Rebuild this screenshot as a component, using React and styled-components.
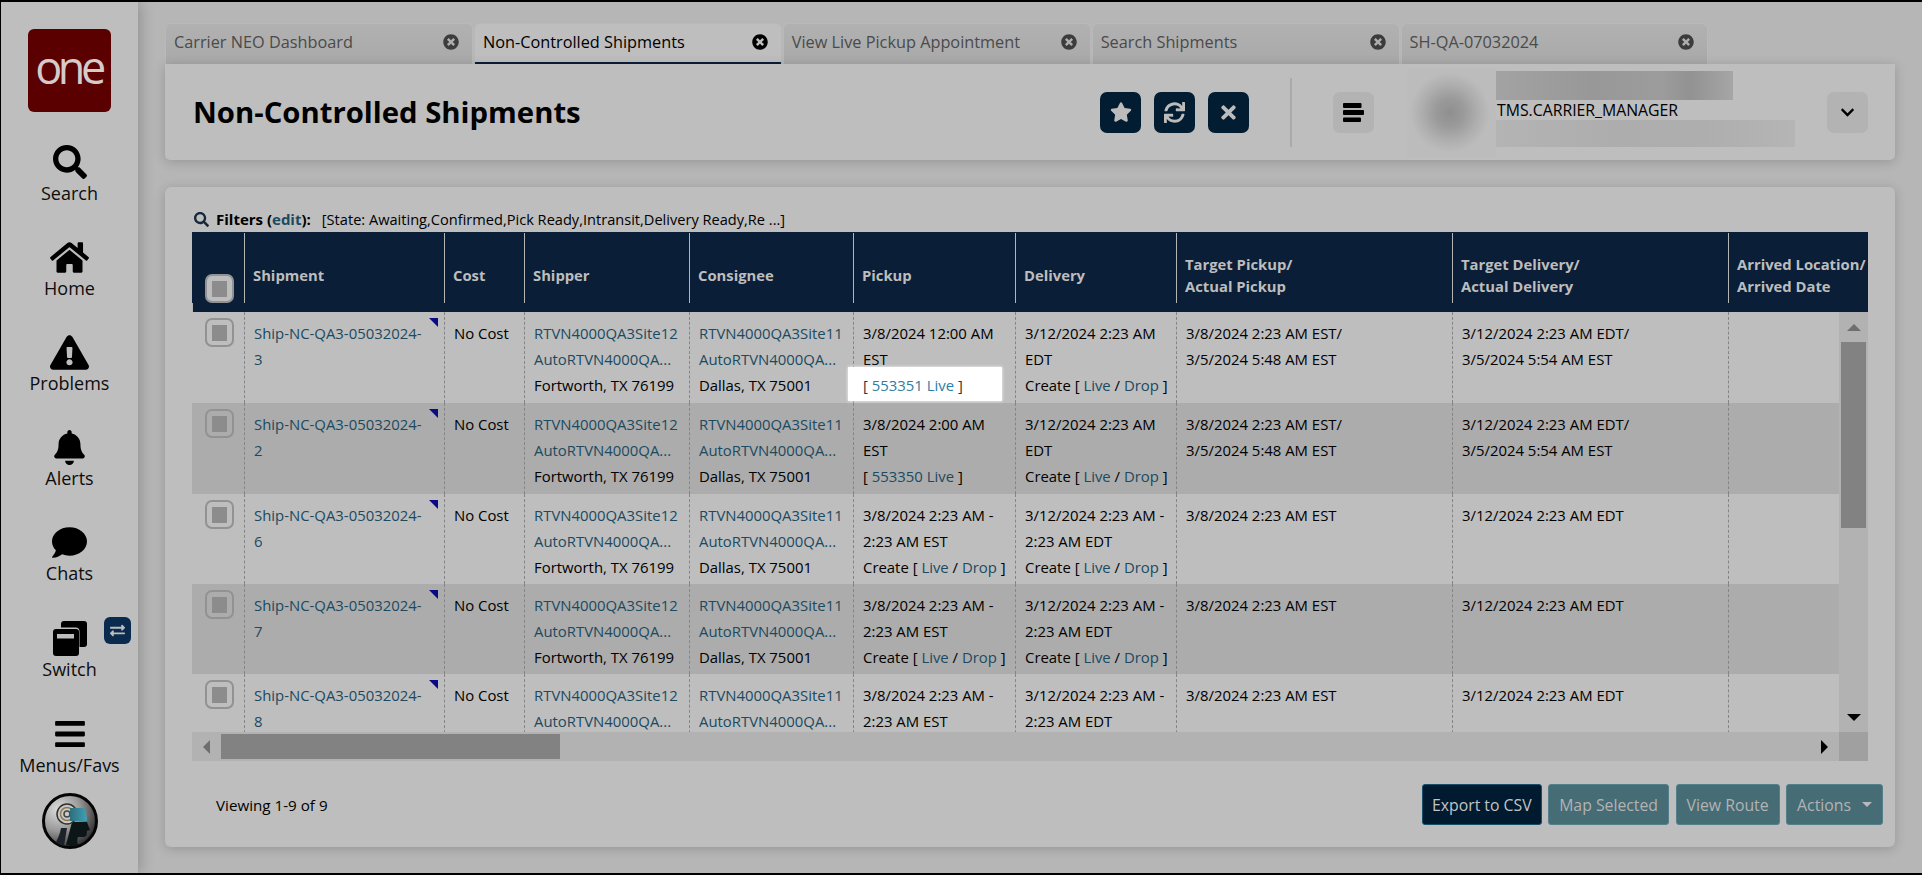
import React from "react";
import styled, { createGlobalStyle } from "styled-components";
import {
  FaSearch, FaHome, FaExclamationTriangle, FaBell, FaComment, FaBars,
  FaStar, FaSync, FaTimes, FaChevronDown, FaExchangeAlt, FaTimesCircle,
} from "react-icons/fa";

const GlobalStyle = createGlobalStyle`
  html, body { margin: 0; padding: 0; background: #000; }
  body { font-family: "Open Sans", "Liberation Sans", sans-serif; overflow: hidden; }
  * { box-sizing: border-box; }
`;

const COLUMNS = "52px 200px 80px 165px 164px 162px 161px 276px 276px 160px";

const Frame = styled.div`
  width: 1922px;
  height: 875px;
  border-top: 2px solid #000;
  border-bottom: 2px solid #000;
  border-left: 1px solid #000;
  display: flex;
  overflow: hidden;
  background: #b6b6b6;
`;

const Sidebar = styled.nav`
  width: 137px;
  flex: none;
  background: #bebebe;
  display: flex;
  flex-direction: column;
  align-items: center;
  padding-top: 27px;
  box-shadow: 2px 0 14px rgba(0, 0, 0, 0.22);
  position: relative;
  z-index: 2;
`;

const Logo = styled.div`
  width: 83px;
  height: 83px;
  border-radius: 6px;
  background: #5a0000;
  color: #d6cbcb;
  font-size: 45px;
  font-weight: 400;
  line-height: 76px;
  letter-spacing: -4.5px;
  text-align: center;
  padding-right: 2px;
  font-family: "Open Sans", "Liberation Sans", sans-serif;
`;

const NavList = styled.div`
  margin-top: 30px;
  display: flex;
  flex-direction: column;
  gap: 33px;
  align-self: stretch;
`;

const NavItem = styled.div`
  position: relative;
  display: flex;
  flex-direction: column;
  align-items: center;
  &:nth-child(n + 6) { margin-top: 1px; }
`;

const NavIcon = styled.div`
  height: 40px;
  display: flex;
  align-items: center;
  justify-content: center;
  color: #000;
`;

const NavLabel = styled.div`
  font-size: 18px;
  line-height: 22px;
  color: #0d0d0d;
`;

const SwitchBadge = styled.div`
  position: absolute;
  left: 103px;
  top: -1px;
  width: 27px;
  height: 27px;
  border-radius: 6px;
  background: #0b2b4e;
  color: #bdbdbd;
  display: flex;
  align-items: center;
  justify-content: center;
`;

const AvatarWrap = styled.div`
  margin-top: 17px;
  width: 56px;
  height: 56px;
`;

const Main = styled.main`
  flex: 1;
  min-width: 0;
  padding: 21px 27px 0 27px;
  display: flex;
  flex-direction: column;
`;

const TabBar = styled.div`
  display: flex;
  gap: 1px;
  height: 41px;
  flex: none;
`;

const Tab = styled.div`
  width: 307.9px;
  height: 41px;
  flex: none;
  padding: 0 13px 4px 8px;
  display: flex;
  align-items: center;
  justify-content: space-between;
  font-size: 16.3px;
  border-radius: 6px 6px 0 0;
  border: 1px solid #b9b9b9;
  border-bottom: none;
  color: ${(p) => (p.$active ? "#000" : "#4a4a4a")};
  background: ${(p) => (p.$active ? "#bebebe" : "linear-gradient(#b1b1b1, #a9a9a9)")};
  box-shadow: ${(p) => (p.$active ? "inset 0 -2px 0 #0a1e38" : "none")};
  svg { flex: none; color: ${(p) => (p.$active ? "#000" : "#3c3c3c")}; }
`;

const HeaderCard = styled.header`
  height: 96px;
  flex: none;
  background: #bebebe;
  border-radius: 0 0 5px 5px;
  box-shadow: 0 2px 12px rgba(0, 0, 0, 0.18);
  display: flex;
  align-items: center;
  padding: 0 27px 0 28px;
  position: relative;
`;

const Title = styled.h1`
  flex: 1;
  margin: 0;
  font-size: 29.3px;
  font-weight: 700;
  color: #000;
`;

const Actions = styled.div`
  display: flex;
  gap: 13px;
`;

const SquareButton = styled.div`
  width: 41px;
  height: 41px;
  border-radius: 7px;
  display: flex;
  align-items: center;
  justify-content: center;
  background: ${(p) => (p.$muted ? "#b3b3b3" : "#021c31")};
  color: ${(p) => (p.$muted ? "#000" : "#bcbcbc")};
`;

const Divider = styled.div`
  width: 2px;
  height: 69px;
  background: #aaa;
  margin: 0 41px;
`;

const PhotoBlur = styled.div`
  width: 89px;
  height: 89px;
  margin-left: 33px;
  background: radial-gradient(circle at 48% 50%, #8f8f8f 0, #9a9a9a 14px, #aeaeae 28px, #bcbcbc 40px);
`;

const UserBlock = styled.div`
  width: 299px;
  margin: 0 32px 0 0;
  align-self: flex-start;
  padding-top: 7px;
`;

const BlurName = styled.div`
  width: 237px;
  height: 29px;
  background: linear-gradient(90deg, #a3a3a3, #989898 40%, #9c9c9c 70%, #929292 82%, #a6a6a6);
`;

const Role = styled.div`
  height: 20px;
  line-height: 20px;
  font-size: 15.8px;
  color: #000;
  padding-left: 1px;
`;

const BlurSub = styled.div`
  height: 27px;
  background: linear-gradient(90deg, #b4b4b4, #adadad 40%, #aeaeae 70%, #b5b5b5);
`;

const GridCard = styled.section`
  margin-top: 27px;
  height: 660px;
  flex: none;
  background: #bebebe;
  border-radius: 6px;
  box-shadow: 0 2px 12px rgba(0, 0, 0, 0.18);
  padding: 22px 27px 0;
`;

const FilterRow = styled.div`
  height: 23px;
  display: flex;
  align-items: center;
  padding: 0 0 3px 2px;
  font-size: 14.6px;
  color: #000;
  svg { color: #15283c; margin-right: 7px; }
`;

const FilterLabel = styled.b`
  font-weight: 700;
  font-size: 15px;
  margin-right: 11px;
`;

const TableBox = styled.div`
  width: 1676px;
`;

const HeadRow = styled.div`
  height: 80px;
  background: #0a1e38;
  display: grid;
  grid-template-columns: ${COLUMNS};
  overflow: hidden;
  padding-top: 1px;
`;

const HeadCell = styled.div`
  border-left: 1px solid #b5b5b5;
  color: #bdbdbd;
  font-weight: 700;
  font-size: 14.8px;
  line-height: 22px;
  padding: 13px 0 0 8px;
  display: flex;
  align-items: center;
  white-space: nowrap;
`;

const HeadCheckCell = styled.div`
  padding: 41px 0 0 13px;
`;

const BodyArea = styled.div`
  display: flex;
  height: 420px;
`;

const Rows = styled.div`
  width: 1647px;
  overflow: hidden;
  position: relative;
`;

const Row = styled.div`
  display: grid;
  grid-template-columns: ${COLUMNS};
  width: 1676px;
  height: ${(p) => p.$h}px;
  background: ${(p) => (p.$alt ? "#acacac" : "#bebebe")};
`;

const Cell = styled.div`
  border-left: 1px dashed #858585;
  padding: 8px 0 0 9px;
  font-size: 14.9px;
  line-height: 26px;
  color: #000;
  white-space: nowrap;
  position: relative;
`;

const CheckCell = styled.div`
  padding: 6px 0 0 13px;
`;

const Check = styled.div`
  width: 29px;
  height: 29px;
  border: 2px solid #929292;
  border-radius: 7px;
  background: ${(p) => (p.$head ? "#bdbdbd" : "transparent")};
  display: flex;
  align-items: center;
  justify-content: center;
  &::after {
    content: "";
    width: 15px;
    height: 16px;
    background: #8c8c8c;
  }
`;

const Link = styled.a`
  color: ${(p) => (p.$bright ? "#2a7fa5" : "#1b4a61")};
  text-decoration: none;
`;

const Corner = styled.span`
  position: absolute;
  top: 6px;
  right: 6px;
  width: 0;
  height: 0;
  border-top: 9px solid #0a0a86;
  border-left: 9px solid transparent;
`;

const Line = styled.div`
  height: 26px;
`;

const Highlight = styled.div`
  position: relative;
  height: 26px;
  z-index: 3;
  color: #333;
  &::before {
    content: "";
    position: absolute;
    left: -15px;
    top: -5px;
    width: 154px;
    height: 34px;
    background: #fff;
    box-shadow: 0 0 3px rgba(255, 255, 255, 0.9);
    z-index: -1;
  }
`;

const VBar = styled.div`
  width: 29px;
  background: #b2b2b2;
  display: flex;
  flex-direction: column;
  align-items: center;
`;

const VArrowBox = styled.div`
  height: 30px;
  flex: none;
  display: flex;
  align-items: center;
  justify-content: center;
`;

const ArrowUp = styled.span`
  border-left: 7px solid transparent;
  border-right: 7px solid transparent;
  border-bottom: 7px solid #6e6e6e;
`;

const ArrowDown = styled.span`
  border-left: 7px solid transparent;
  border-right: 7px solid transparent;
  border-top: 7px solid #000;
`;

const VThumb = styled.div`
  width: 25px;
  height: 186px;
  flex: none;
  background: #828282;
`;

const Spacer = styled.div`
  flex: 1;
`;

const HBarRow = styled.div`
  display: flex;
  height: 29px;
  background: #b2b2b2;
`;

const HArrowBox = styled.div`
  width: 29px;
  flex: none;
  display: flex;
  align-items: center;
  justify-content: center;
`;

const ArrowLeft = styled.span`
  border-top: 7px solid transparent;
  border-bottom: 7px solid transparent;
  border-right: 7px solid #6e6e6e;
`;

const ArrowRight = styled.span`
  border-top: 7px solid transparent;
  border-bottom: 7px solid transparent;
  border-left: 7px solid #000;
`;

const HThumb = styled.div`
  width: 339px;
  height: 25px;
  margin-top: 2px;
  flex: none;
  background: #828282;
`;

const ScrollCorner = styled.div`
  width: 29px;
  flex: none;
  background: #a0a0a0;
`;

const Footer = styled.div`
  margin: 23px -15px 0 0;
  display: flex;
  align-items: center;
  height: 41px;
  padding-left: 24px;
`;

const Count = styled.div`
  flex: 1;
  font-size: 15.2px;
  color: #000;
`;

const ButtonRow = styled.div`
  display: flex;
  gap: 6.5px;
`;

const FootButton = styled.div`
  height: 41px;
  padding: 0 ${(p) => (p.$primary ? "9px" : "10px")};
  display: flex;
  align-items: center;
  gap: 11px;
  font-size: 15.8px;
  border-radius: 3px;
  border: 1px solid ${(p) => (p.$primary ? "#15506a" : "#54808c")};
  background: ${(p) => (p.$primary ? "#001a30" : "#466c76")};
  color: ${(p) => (p.$primary ? "#c4c4c4" : "#b3b3b3")};
`;

const Caret = styled.span`
  border-left: 5px solid transparent;
  border-right: 5px solid transparent;
  border-top: 5px solid #b9b9b9;
`;

function SwitchGlyph() {
  return (
    <svg width="34" height="35" viewBox="0 0 34 35">
      <rect x="8" y="0" width="26" height="26" rx="3" fill="#000" />
      <rect x="-1.5" y="6.5" width="28" height="29" rx="4" fill="#bebebe" />
      <rect x="0" y="8" width="26" height="27" rx="3" fill="#000" />
      <rect x="4" y="13" width="17" height="4.5" fill="#bdbdbd" />
    </svg>
  );
}

function RobotAvatar() {
  return (
    <svg width="56" height="56" viewBox="0 0 56 56">
      <defs>
        <radialGradient id="av" cx="28%" cy="28%" r="80%">
          <stop offset="0" stopColor="#dcdcdc" />
          <stop offset="0.5" stopColor="#9a9a9a" />
          <stop offset="1" stopColor="#2c2c2c" />
        </radialGradient>
        <linearGradient id="visor" x1="0" x2="1" y1="0" y2="0">
          <stop offset="0" stopColor="#2d6f7e" />
          <stop offset="1" stopColor="#3fa0b5" />
        </linearGradient>
        <filter id="soft"><feGaussianBlur stdDeviation="0.45" /></filter>
      </defs>
      <circle cx="28" cy="28" r="26.5" fill="url(#av)" stroke="#050505" strokeWidth="3" />
      <g filter="url(#soft)">
        <path d="M30 29h15l3 8-3 1c0 3 0 5-3 6l-6 0c-1 3-1 5 0 8-4 1.500-8 1.500-12 0 2-8 4-15 6-23z" fill="#0f1519" />
        <path d="M19 35l6 0-3 18c-3-1-6-2-8-4 2-4 4-8 5-14z" fill="#1a2429" />
        <circle cx="25" cy="21" r="10" fill="#c9c9c9" stroke="#33312a" strokeWidth="1.5" />
        <circle cx="25" cy="21" r="6.500" fill="none" stroke="#8c7c4d" strokeWidth="1.500" />
        <circle cx="25" cy="21" r="3" fill="none" stroke="#444" strokeWidth="1.500" />
        <path d="M28 15h14c2 3 3 9 3 13h-17z" fill="url(#visor)" />
      </g>
    </svg>
  );
}

function HamburgerGlyph() {
  return (
    <svg width="21" height="19" viewBox="0 0 21 19">
      <rect x="0" y="0" width="18.500" height="5" rx="1" fill="#000" />
      <rect x="0" y="7" width="21" height="5" rx="1" fill="#000" />
      <rect x="0" y="14.500" width="18" height="4.500" rx="1" fill="#000" />
    </svg>
  );
}

const NAV = [
  ["Search", <FaSearch size={34} />],
  ["Home", <FaHome size={39} />],
  ["Problems", <FaExclamationTriangle size={39} />],
  ["Alerts", <FaBell size={35} />],
  ["Chats", <FaComment size={35} />],
  ["Switch", <SwitchGlyph />],
  ["Menus/Favs", <FaBars size={34} />],
];

const TABS = [
  ["Carrier NEO Dashboard"],
  ["Non-Controlled Shipments", true],
  ["View Live Pickup Appointment"],
  ["Search Shipments"],
  ["SH-QA-07032024"],
];

const HEADS = [
  ["Shipment"], ["Cost"], ["Shipper"], ["Consignee"], ["Pickup"], ["Delivery"],
  ["Target Pickup/", "Actual Pickup"],
  ["Target Delivery/", "Actual Delivery"],
  ["Arrived Location/", "Arrived Date"],
];

const CREATE = (
  <>
    Create [ <Link>Live</Link> / <Link>Drop</Link> ]
  </>
);

const ROWS = [
  {
    id: "3", h: 91,
    pickup: ["3/8/2024 12:00 AM", "EST"], appt: "553351", hot: true,
    delivery: ["3/12/2024 2:23 AM", "EDT"],
    tp: ["3/8/2024 2:23 AM EST/", "3/5/2024 5:48 AM EST"],
    td: ["3/12/2024 2:23 AM EDT/", "3/5/2024 5:54 AM EST"],
  },
  {
    id: "2", h: 91,
    pickup: ["3/8/2024 2:00 AM", "EST"], appt: "553350",
    delivery: ["3/12/2024 2:23 AM", "EDT"],
    tp: ["3/8/2024 2:23 AM EST/", "3/5/2024 5:48 AM EST"],
    td: ["3/12/2024 2:23 AM EDT/", "3/5/2024 5:54 AM EST"],
  },
  ...[["6", 90], ["7", 90], ["8", 90]].map(([id, h]) => ({
    id, h,
    pickup: ["3/8/2024 2:23 AM -", "2:23 AM EST"],
    delivery: ["3/12/2024 2:23 AM -", "2:23 AM EDT"],
    tp: ["3/8/2024 2:23 AM EST"],
    td: ["3/12/2024 2:23 AM EDT"],
  })),
];

function Lines({ items }) {
  return items.map((t) => <Line key={t}>{t}</Line>);
}

function Appointment({ row }) {
  if (row.hot) {
    return (
      <Highlight>
        [ <Link $bright>{row.appt} Live</Link> ]
      </Highlight>
    );
  }
  if (row.appt) {
    return (
      <Line>
        [ <Link>{row.appt} Live</Link> ]
      </Line>
    );
  }
  return <Line>{CREATE}</Line>;
}

export default function App() {
  return (
    <>
      <GlobalStyle />
      <Frame>
        <Sidebar>
          <Logo>one</Logo>
          <NavList>
            {NAV.map(([label, icon]) => (
              <NavItem key={label}>
                <NavIcon>{icon}</NavIcon>
                <NavLabel>{label}</NavLabel>
                {label === "Switch" && (
                  <SwitchBadge>
                    <FaExchangeAlt size={15} />
                  </SwitchBadge>
                )}
              </NavItem>
            ))}
          </NavList>
          <AvatarWrap>
            <RobotAvatar />
          </AvatarWrap>
        </Sidebar>
        <Main>
          <TabBar>
            {TABS.map(([label, active]) => (
              <Tab key={label} $active={active}>
                <span>{label}</span>
                <FaTimesCircle size={16} />
              </Tab>
            ))}
          </TabBar>
          <HeaderCard>
            <Title>Non-Controlled Shipments</Title>
            <Actions>
              <SquareButton><FaStar size={22} /></SquareButton>
              <SquareButton><FaSync size={21} /></SquareButton>
              <SquareButton><FaTimes size={21} /></SquareButton>
            </Actions>
            <Divider />
            <SquareButton $muted><HamburgerGlyph /></SquareButton>
            <PhotoBlur />
            <UserBlock>
              <BlurName />
              <Role>TMS.CARRIER_MANAGER</Role>
              <BlurSub />
            </UserBlock>
            <SquareButton $muted><FaChevronDown size={15} /></SquareButton>
          </HeaderCard>
          <GridCard>
            <FilterRow>
              <FaSearch size={15} />
              <FilterLabel>Filters (<Link>edit</Link>):</FilterLabel>
              <span>[State: Awaiting,Confirmed,Pick Ready,Intransit,Delivery Ready,Re ...]</span>
            </FilterRow>
            <TableBox>
              <HeadRow>
                <HeadCheckCell><Check $head /></HeadCheckCell>
                {HEADS.map((lines) => (
                  <HeadCell key={lines[0]}>
                    <div>{lines.map((l) => <div key={l}>{l}</div>)}</div>
                  </HeadCell>
                ))}
                <HeadCell />
              </HeadRow>
              <BodyArea>
                <Rows>
                  {ROWS.map((row, i) => (
                    <Row key={row.id} $h={row.h} $alt={i % 2 === 1}>
                      <CheckCell><Check /></CheckCell>
                      <Cell>
                        <Line><Link>Ship-NC-QA3-05032024-</Link></Line>
                        <Line><Link>{row.id}</Link></Line>
                        <Corner />
                      </Cell>
                      <Cell><Line>No Cost</Line></Cell>
                      <Cell>
                        <Line><Link>RTVN4000QA3Site12</Link></Line>
                        <Line><Link>AutoRTVN4000QA...</Link></Line>
                        <Line>Fortworth, TX 76199</Line>
                      </Cell>
                      <Cell>
                        <Line><Link>RTVN4000QA3Site11</Link></Line>
                        <Line><Link>AutoRTVN4000QA...</Link></Line>
                        <Line>Dallas, TX 75001</Line>
                      </Cell>
                      <Cell>
                        <Lines items={row.pickup} />
                        <Appointment row={row} />
                      </Cell>
                      <Cell>
                        <Lines items={row.delivery} />
                        <Line>{CREATE}</Line>
                      </Cell>
                      <Cell><Lines items={row.tp} /></Cell>
                      <Cell><Lines items={row.td} /></Cell>
                      <Cell />
                    </Row>
                  ))}
                </Rows>
                <VBar>
                  <VArrowBox><ArrowUp /></VArrowBox>
                  <VThumb />
                  <Spacer />
                  <VArrowBox><ArrowDown /></VArrowBox>
                </VBar>
              </BodyArea>
              <HBarRow>
                <HArrowBox><ArrowLeft /></HArrowBox>
                <HThumb />
                <Spacer />
                <HArrowBox><ArrowRight /></HArrowBox>
                <ScrollCorner />
              </HBarRow>
            </TableBox>
            <Footer>
              <Count>Viewing 1-9 of 9</Count>
              <ButtonRow>
                <FootButton $primary>Export to CSV</FootButton>
                <FootButton>Map Selected</FootButton>
                <FootButton>View Route</FootButton>
                <FootButton>Actions <Caret /></FootButton>
              </ButtonRow>
            </Footer>
          </GridCard>
        </Main>
      </Frame>
    </>
  );
}
